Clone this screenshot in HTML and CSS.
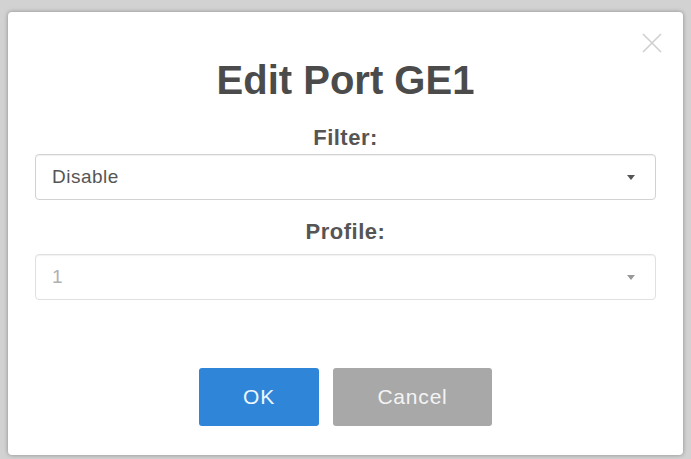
FILE: index.html
```html
<!DOCTYPE html>
<html lang="en">
  <head>
    <meta charset="UTF-8" />
    <meta name="viewport" content="width=device-width, initial-scale=1.0" />
    <title>Edit Port GE1</title>
    <link rel="stylesheet" href="styles.css">
  </head>
  <body>
    <div class="modal">
      <button class="close" aria-label="Close">
        <svg width="20" height="20" viewBox="0 0 20 20">
          <path d="M1 1L19 19M19 1L1 19" stroke="#cfcfcf" stroke-width="1.6" fill="none" />
        </svg>
      </button>
      <h1>Edit Port GE1</h1>

      <label class="field-label">Filter:</label>
      <div class="select">
        <span>Disable</span>
        <span class="caret"></span>
      </div>

      <label class="field-label second">Profile:</label>
      <div class="select disabled">
        <span>1</span>
        <span class="caret"></span>
      </div>

      <!-- Footer buttons -->
      <div class="actions">
        <button class="btn btn-ok">OK</button>
        <button class="btn btn-cancel">Cancel</button>
      </div>
    </div>
  </body>
</html>
```

FILE: styles.css
```css
* {
  margin: 0;
  padding: 0;
  box-sizing: border-box;
}

body {
  font-family: "Liberation Sans", Arial, sans-serif;
  background-color: #d2d2d2;
  height: 459px;
  padding: 12px 8px 4px 8px;
}

.modal {
  position: relative;
  background: #fff;
  height: 443px;
  border-radius: 4px;
  box-shadow: 0 0 4px rgba(0, 0, 0, 0.35);
  padding: 0 27px 0 27px;
  display: flex;
  flex-direction: column;
}

.close {
  position: absolute;
  top: 21px;
  right: 21px;
  background: none;
  border: none;
  width: 20px;
  height: 20px;
  cursor: pointer;
}

h1 {
  margin-top: 46px;
  font-size: 40px;
  line-height: 44px;
  font-weight: bold;
  color: #4b4b4b;
  text-align: center;
}

.field-label {
  display: block;
  margin-top: 24px;
  margin-bottom: 4px;
  font-size: 22px;
  line-height: 24px;
  font-weight: bold;
  letter-spacing: 0.5px;
  color: #555;
  text-align: center;
}

.field-label.second {
  margin-top: 20px;
  margin-bottom: 10px;
}

.select {
  height: 46px;
  border: 1px solid #d2d2d2;
  border-radius: 4px;
  padding: 0 20px 0 16px;
  display: flex;
  align-items: center;
  justify-content: space-between;
  font-size: 19px;
  letter-spacing: 0.5px;
  color: #555;
  box-shadow: inset 0 1px 1px rgba(0, 0, 0, 0.06);
}

.select.disabled {
  color: #b0b0b0;
  border-color: #e0e0e0;
}

.caret {
  width: 0;
  height: 0;
  border-left: 4px solid transparent;
  border-right: 4px solid transparent;
  border-top: 5px solid #555;
}

.select.disabled .caret {
  border-top-color: #999;
}

.actions {
  margin-top: 68px;
  display: flex;
  justify-content: center;
  gap: 14px;
}

.btn {
  height: 58px;
  border: none;
  border-radius: 3px;
  font-family: inherit;
  font-size: 21px;
  letter-spacing: 0.8px;
  cursor: pointer;
}

.btn-ok {
  width: 120px;
  background-color: #2f86d8;
  color: #eef6ff;
}

.btn-cancel {
  width: 159px;
  background-color: #a8a8a8;
  color: #f4f4f4;
}
```
